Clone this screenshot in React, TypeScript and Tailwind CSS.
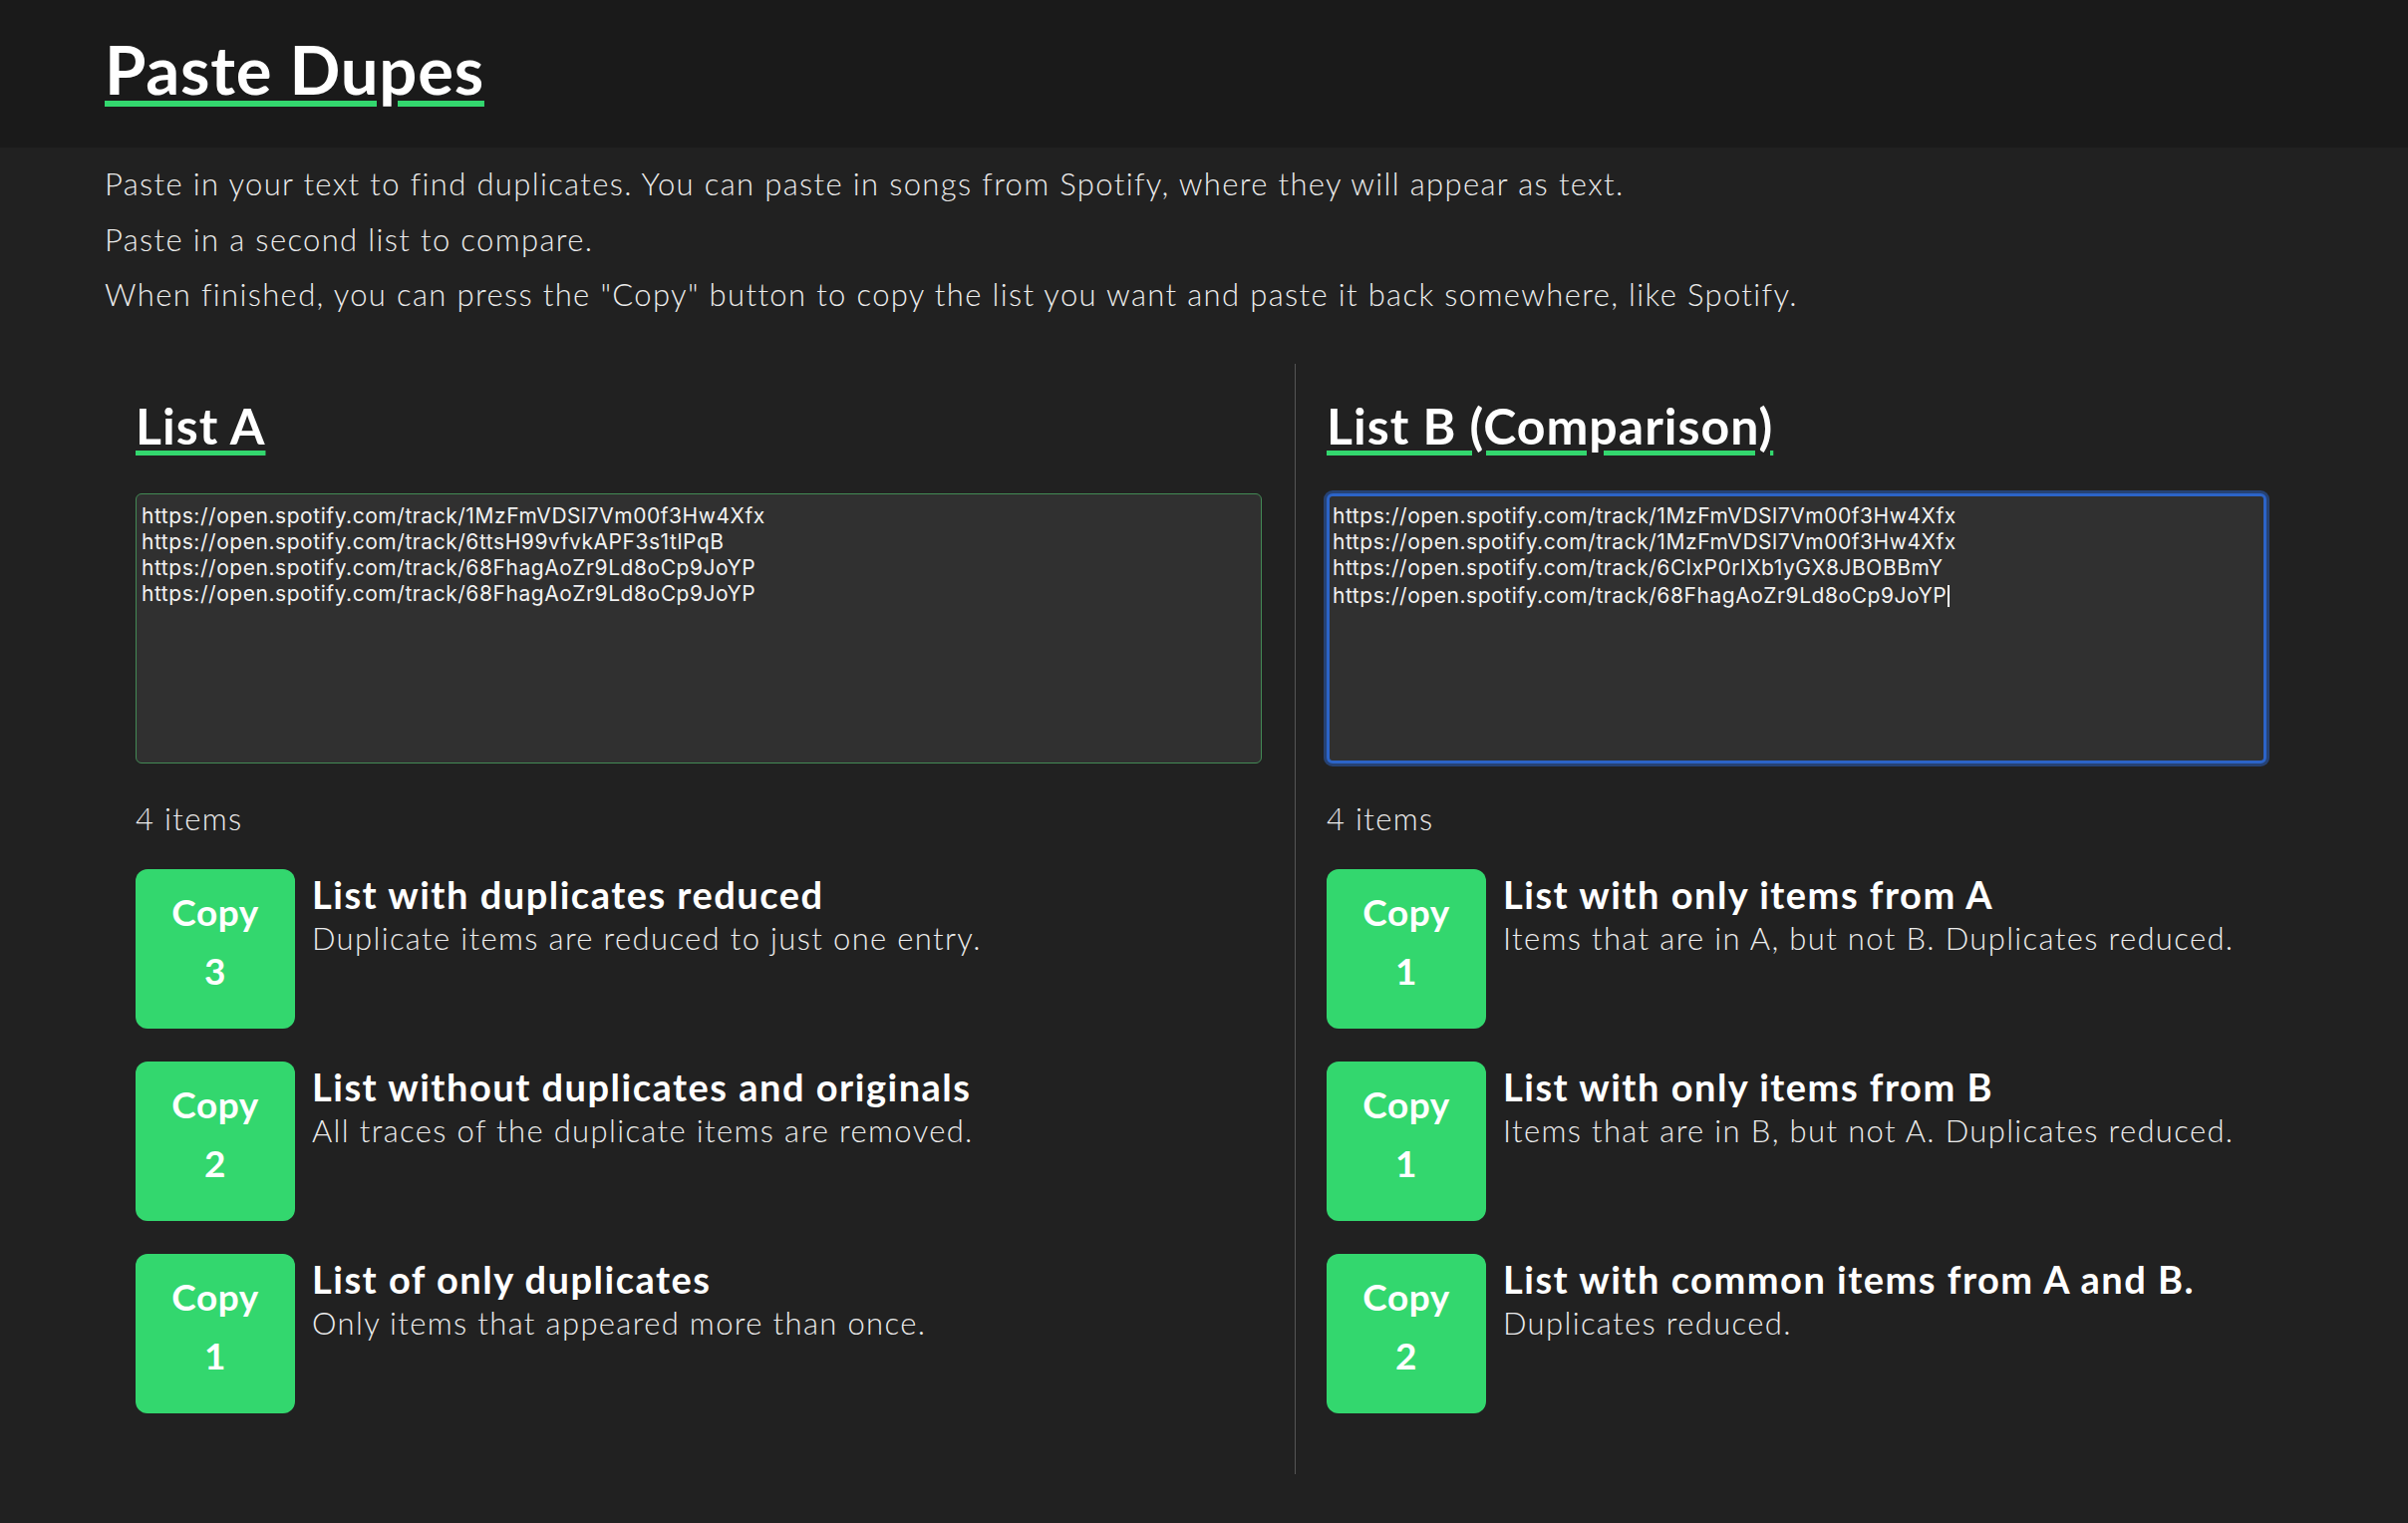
import React from "react";

const listA = [
  "https://open.spotify.com/track/1MzFmVDSl7Vm00f3Hw4Xfx",
  "https://open.spotify.com/track/6ttsH99vfvkAPF3s1tlPqB",
  "https://open.spotify.com/track/68FhagAoZr9Ld8oCp9JoYP",
  "https://open.spotify.com/track/68FhagAoZr9Ld8oCp9JoYP",
];
const listB = [
  "https://open.spotify.com/track/1MzFmVDSl7Vm00f3Hw4Xfx",
  "https://open.spotify.com/track/1MzFmVDSl7Vm00f3Hw4Xfx",
  "https://open.spotify.com/track/6ClxP0rIXb1yGX8JBOBBmY",
  "https://open.spotify.com/track/68FhagAoZr9Ld8oCp9JoYP",
];

type Item = { count: number; title: string; desc: string };

const itemsA: Item[] = [
  { count: 3, title: "List with duplicates reduced", desc: "Duplicate items are reduced to just one entry." },
  { count: 2, title: "List without duplicates and originals", desc: "All traces of the duplicate items are removed." },
  { count: 1, title: "List of only duplicates", desc: "Only items that appeared more than once." },
];
const itemsB: Item[] = [
  { count: 1, title: "List with only items from A", desc: "Items that are in A, but not B. Duplicates reduced." },
  { count: 1, title: "List with only items from B", desc: "Items that are in B, but not A. Duplicates reduced." },
  { count: 2, title: "List with common items from A and B.", desc: "Duplicates reduced." },
];

function Actions({ items }: { items: Item[] }) {
  return (
    <div className="mt-[31px] flex flex-col gap-[33px]">
      {items.map((it, i) => (
        <div key={i} className="flex items-start gap-[17px]">
          <button className="flex h-[160px] w-[160px] shrink-0 flex-col items-center rounded-[12px] bg-[#33d76e] pt-[13px] text-[37px] font-bold tracking-[0.5px] text-white">
            <span className="leading-[59px]">Copy</span>
            <span className="leading-[59px]">{it.count}</span>
          </button>
          <div className="pt-[3px]">
            <div className="text-[38px] font-bold leading-[44px] tracking-[1.5px] text-white">{it.title}</div>
            <div className="text-[31px] font-light leading-[44px] tracking-[1.35px] text-[#ececec]">{it.desc}</div>
          </div>
        </div>
      ))}
    </div>
  );
}

function Column({
  heading,
  lines,
  items,
  focused,
  width,
}: {
  heading: string;
  lines: string[];
  items: Item[];
  focused?: boolean;
  width: string;
}) {
  return (
    <div className={`pt-[33px] pb-[61px] ${width}`}>
      <h2 className="text-[50px] font-bold leading-[58px] tracking-[1px] text-white underline decoration-[#33d76e] decoration-[5px] underline-offset-[6px]">
        {heading}
      </h2>
      <div
        className={
          focused
            ? "mt-[39px] h-[271px] w-full rounded-[6px] border-[3px] border-[#2c64c8] bg-[#303030] px-[3px] pt-[7px] shadow-[0_0_0_3px_rgba(44,100,200,0.5)]"
            : "mt-[39px] h-[271px] w-full rounded-[6px] border-[1.5px] border-[#438a55] bg-[#303030] px-[5px] pt-[9px]"
        }
      >
        <div className="font-['Inter',_sans-serif] text-[21px] leading-[26px] tracking-[0.55px] text-[#f2f2f2]">
          {lines.map((l, i) => (
            <div key={i} className="whitespace-pre">
              {l}
              {focused && i === lines.length - 1 ? (
                <span className="ml-[1px] inline-block h-[22px] w-[2px] translate-y-[4px] bg-white" />
              ) : null}
            </div>
          ))}
        </div>
      </div>
      <div className="mt-[35px] text-[31px] font-light leading-[40px] tracking-[1.35px] text-[#ececec]">4 items</div>
      <Actions items={items} />
    </div>
  );
}

export default function App() {
  return (
    <div className="min-h-screen bg-[#212121] font-['Lato',_sans-serif] text-white">
      <header className="flex h-[148px] items-center bg-[#1a1a1a] pb-[10px] pl-[105px]">
        <h1 className="text-[67px] font-bold leading-none tracking-[0.8px] text-white underline decoration-[#33d76e] decoration-[6px] underline-offset-[6px]">
          Paste Dupes
        </h1>
      </header>
      <main className="px-[105px] pt-[9px]">
        <div className="text-[31px] font-light leading-[55.5px] tracking-[1.35px] text-[#ececec]">
          <p>Paste in your text to find duplicates. You can paste in songs from Spotify, where they will appear as text.</p>
          <p>Paste in a second list to compare.</p>
          <p>When finished, you can press the "Copy" button to copy the list you want and paste it back somewhere, like Spotify.</p>
        </div>
        <div className="mt-[41px] flex">
          <div className="w-[1194px] pl-[31px] pr-[33px]">
            <Column heading="List A" lines={listA} items={itemsA} width="w-full" />
          </div>
          <div className="w-px bg-[#555555]" />
          <div className="pl-[31px]">
            <Column heading="List B (Comparison)" lines={listB} items={itemsB} focused width="w-[943px]" />
          </div>
        </div>
      </main>
    </div>
  );
}
